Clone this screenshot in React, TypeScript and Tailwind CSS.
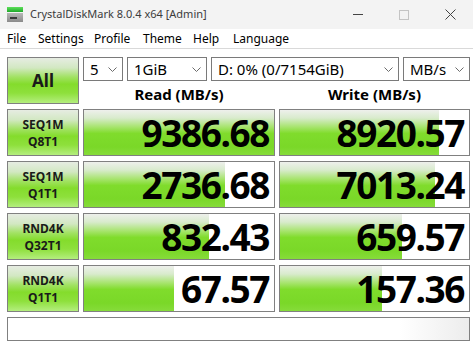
import React from "react";

const rows = [
  { l1: "SEQ1M", l2: "Q8T1", r: "9386.68", rw: 190, w: "8920.57", ww: 159 },
  { l1: "SEQ1M", l2: "Q1T1", r: "2736.68", rw: 141, w: "7013.24", ww: 155 },
  { l1: "RND4K", l2: "Q32T1", r: "832.43", rw: 125, w: "659.57", ww: 122 },
  { l1: "RND4K", l2: "Q1T1", r: "67.57", rw: 90, w: "157.36", ww: 102 },
];

function Chevron() {
  return (
    <svg width="9" height="5" viewBox="0 0 9 5" className="shrink-0">
      <path d="M0.5 0.5 L4.5 4.5 L8.5 0.5" fill="none" stroke="#6b6b6b" strokeWidth="1" />
    </svg>
  );
}

function Select({ text, w }: { text: string; w: string }) {
  return (
    <div className={`${w} h-[24px] border border-[#7a7a7a] bg-white flex items-center justify-between pl-[6px] pr-[5px] text-[15px] text-black leading-none`}>
      <span>{text}</span>
      <Chevron />
    </div>
  );
}

function Meter({ value, fill, w }: { value: string; fill: number; w: string }) {
  return (
    <div className={`${w} h-[47px] border border-[#808080] bg-white relative flex items-center justify-end pr-[5px]`}>
      <div
        className="absolute left-0 top-0 bottom-0 bg-[linear-gradient(to_bottom,#eef0ec_0%,#d8ebcc_18%,#a6e46c_38%,#80dc2c_52%,#7ad828_82%,#86dc3a_100%)]"
        style={{ width: fill }}
      />
      <span className="relative text-[37px] font-bold tracking-[-1.4px] text-black leading-[37px] font-['Noto_Sans',sans-serif]">
        {value}
      </span>
    </div>
  );
}

function Label({ l1, l2 }: { l1: string; l2: string }) {
  return (
    <div className="w-[72px] h-[47px] border border-[#808080] bg-[linear-gradient(to_bottom,#e6ece2_0%,#d2e8c2_22%,#a2e264_42%,#84dc2c_58%,#8ee03c_78%,#b4ee7e_100%)] flex flex-col items-center justify-center text-[12px] font-bold leading-[17px] text-[#1a1a1a]">
      <span>{l1}</span>
      <span>{l2}</span>
    </div>
  );
}

export default function App() {
  return (
    <div className="w-[473px] h-[343px] bg-white overflow-hidden font-['Noto_Sans',sans-serif] text-black">
      {/* Title bar */}
      <div className="h-[29px] bg-[#f3f3f3] flex items-center">
        <svg width="16" height="15" viewBox="0 0 16 15" className="ml-[7px]">
          <defs>
            <linearGradient id="g" x1="0" y1="0" x2="0" y2="1">
              <stop offset="0" stopColor="#5ee05a" />
              <stop offset="1" stopColor="#1ea82a" />
            </linearGradient>
            <linearGradient id="b" x1="0" y1="0" x2="0" y2="1">
              <stop offset="0" stopColor="#b8b8b8" />
              <stop offset="1" stopColor="#8a8a8a" />
            </linearGradient>
          </defs>
          <rect x="0" y="0" width="16" height="5" fill="url(#g)" />
          <rect x="0" y="6" width="16" height="9" fill="url(#b)" />
          <rect x="3" y="10" width="7" height="2" fill="#3a3a3a" />
        </svg>
        <span className="ml-[7px] text-[11px] text-[#3c3c3c]">CrystalDiskMark 8.0.4 x64 [Admin]</span>
        <div className="ml-auto flex items-center h-full">
          <div className="w-[46px] h-full flex items-center justify-center">
            <div className="w-[10px] h-px bg-[#444]" />
          </div>
          <div className="w-[46px] h-full flex items-center justify-center">
            <div className="w-[10px] h-[10px] border border-[#c4c4c4]" />
          </div>
          <div className="w-[46px] h-full flex items-center justify-center">
            <svg width="11" height="11" viewBox="0 0 11 11">
              <path d="M0.5 0.5 L10.5 10.5 M10.5 0.5 L0.5 10.5" stroke="#444" strokeWidth="1" />
            </svg>
          </div>
        </div>
      </div>
      {/* Menu */}
      <div className="h-[20px] bg-white flex items-center text-[12px] leading-none pl-[7px] border-b border-[#d9d9d9]">
        <span className="w-[31px]">File</span>
        <span className="w-[56px]">Settings</span>
        <span className="w-[49px]">Profile</span>
        <span className="w-[50px]">Theme</span>
        <span className="w-[40px]">Help</span>
        <span>Language</span>
      </div>
      {/* Body */}
      <div className="pt-[8px] pl-[7px] flex flex-col gap-[5px]">
        <div className="flex gap-[4px]">
          <div className="w-[72px] h-[47px] border border-[#808080] bg-[linear-gradient(to_bottom,#e6ece2_0%,#d2e8c2_22%,#a2e264_42%,#84dc2c_58%,#8ee03c_78%,#b4ee7e_100%)] flex items-center justify-center text-[17px] font-bold text-[#1a1a1a]">
            All
          </div>
          <div className="flex flex-col">
            <div className="flex gap-[4px]">
              <Select text="5" w="w-[40px]" />
              <Select text="1GiB" w="w-[80px]" />
              <Select text="D: 0% (0/7154GiB)" w="w-[188px]" />
              <Select text="MB/s" w="w-[67px]" />
            </div>
            <div className="flex gap-[4px] h-[23px] items-center text-[15px] font-bold leading-none">
              <div className="w-[192px] text-center pt-[3px]">Read (MB/s)</div>
              <div className="w-[191px] text-center pt-[3px]">Write (MB/s)</div>
            </div>
          </div>
        </div>
        {rows.map((r, i) => (
          <div key={i} className="flex gap-[4px]">
            <Label l1={r.l1} l2={r.l2} />
            <Meter value={r.r} fill={r.rw} w="w-[192px]" />
            <Meter value={r.w} fill={r.ww} w="w-[191px]" />
          </div>
        ))}
        <div className="w-[463px] h-[24px] border border-[#808080] bg-[linear-gradient(to_right,#ffffff_0%,#ffffff_85%,#ececec_100%)]" />
      </div>
    </div>
  );
}
